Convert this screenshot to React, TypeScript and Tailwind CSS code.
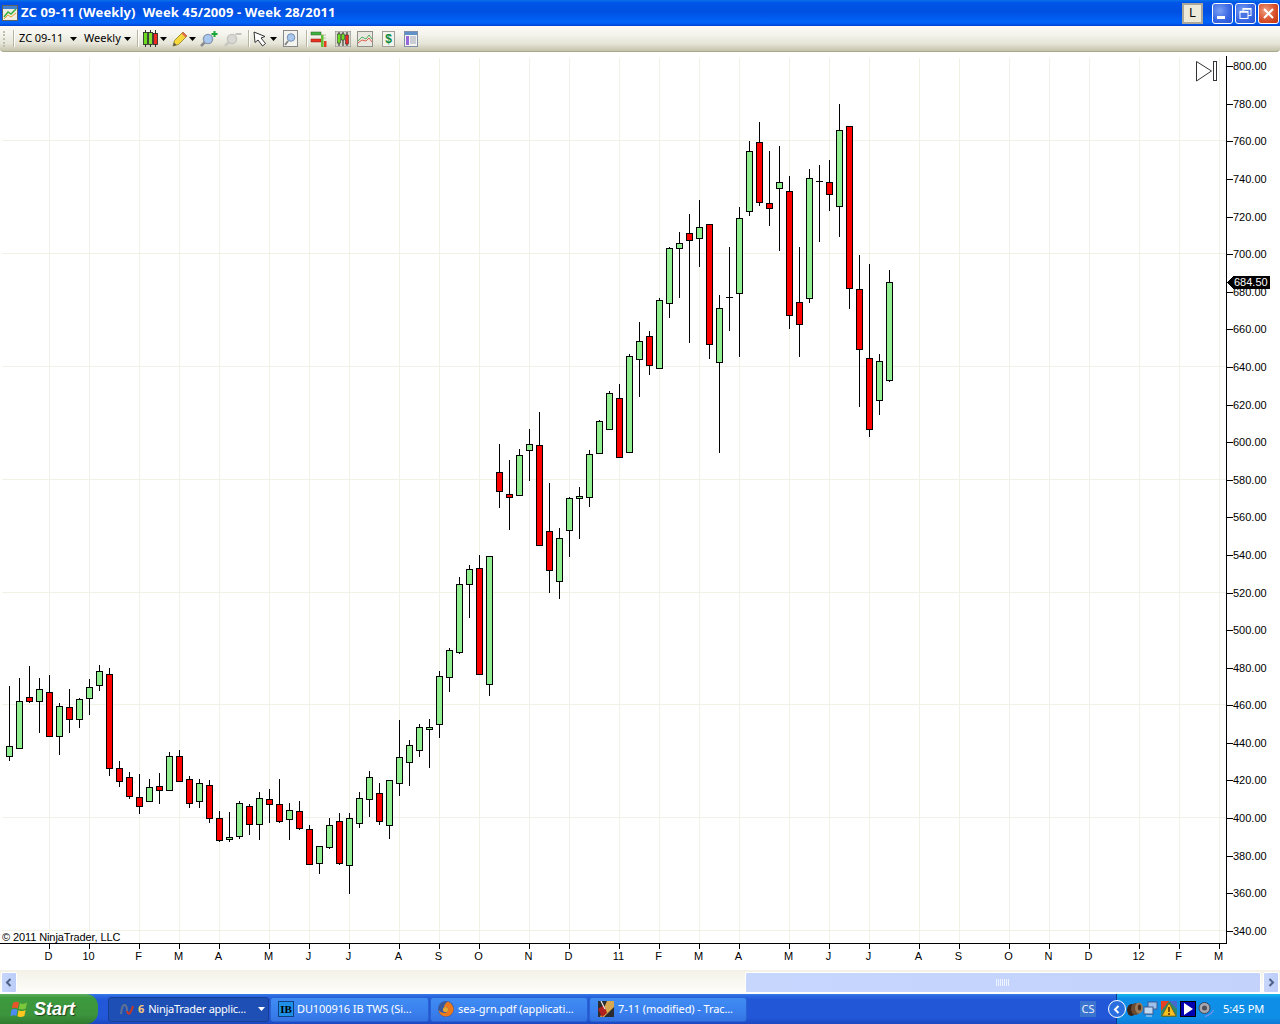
import React from "react";

type C = [number, number, number, number, "g" | "r" | "d"];
// wickTop, wickBottom, bodyTop, bodyBottom; x = 9 + 10 * index
const candles: C[] = [
  [686,761,746,756,"g"],[678,749,701,748,"g"],[666,703,697,701,"r"],[678,733,689,701,"g"],[675,737,692,736,"r"],
  [703,755,706,736,"g"],[689,733,707,719,"r"],[698,728,699,719,"g"],[679,715,687,698,"g"],[665,691,671,685,"g"],
  [668,776,674,768,"r"],[761,787,768,781,"r"],[772,799,777,796,"r"],[774,814,797,806,"r"],[779,802,787,801,"g"],
  [773,804,786,790,"r"],[752,790,756,790,"g"],[750,782,756,781,"r"],[776,808,779,803,"r"],[779,808,783,801,"g"],
  [780,823,785,818,"r"],[811,842,818,840,"r"],[812,842,837,839,"g"],[801,839,803,836,"g"],[804,835,806,824,"r"],
  [792,840,798,824,"g"],[789,823,799,804,"r"],[779,823,804,821,"r"],[803,840,810,819,"g"],[801,830,811,828,"r"],
  [825,865,829,864,"r"],[846,874,846,863,"g"],[818,849,825,847,"g"],[813,865,821,863,"r"],[813,894,818,865,"g"],
  [792,828,798,823,"g"],[771,817,777,799,"g"],[783,825,793,821,"r"],[780,839,780,825,"g"],[720,796,757,783,"g"],
  [740,786,745,762,"g"],[724,757,727,750,"g"],[719,768,727,729,"g"],[671,738,676,724,"g"],[648,692,650,677,"g"],
  [577,654,584,652,"g"],[565,618,569,584,"g"],[555,674,568,674,"r"],[556,696,556,684,"g"],[444,508,472,491,"r"],
  [460,530,494,497,"r"],[449,496,455,495,"g"],[429,481,444,450,"g"],[412,545,445,545,"r"],[483,593,531,570,"r"],
  [528,599,538,581,"g"],[497,557,498,530,"g"],[487,539,496,498,"g"],[450,507,454,497,"g"],[420,454,421,453,"g"],
  [391,430,393,429,"g"],[384,458,398,457,"r"],[354,453,356,452,"g"],[322,397,341,359,"g"],[331,375,336,365,"r"],
  [298,368,300,368,"g"],[247,318,248,303,"g"],[232,298,243,248,"g"],[214,343,233,240,"r"],[200,267,227,238,"g"],
  [224,359,224,344,"r"],[295,453,308,362,"g"],[247,331,297,297,"d"],[207,357,218,293,"g"],[141,216,151,211,"g"],
  [122,206,142,202,"r"],[151,226,203,208,"r"],[146,251,182,188,"g"],[176,329,191,315,"r"],[247,357,302,324,"r"],
  [169,303,178,298,"g"],[165,242,181,181,"d"],[160,211,182,194,"r"],[104,237,130,206,"g"],[126,309,126,288,"r"],
  [255,407,289,349,"r"],[264,437,358,429,"r"],[354,415,361,400,"g"],[270,382,282,380,"g"],
];

const vGrid = [49,89,139,179,219,269,309,349,399,439,479,529,569,619,659,699,739,789,829,869,919,959,1009,1049,1089,1139,1179,1219];
const xLabels = ["D","10","F","M","A","M","J","J","A","S","O","N","D","11","F","M","A","M","J","J","A","S","O","N","D","12","F","M"];
const hGrid = [140,253,366,479,592,704,817,930];
const prices = Array.from({ length: 24 }, (_, i) => 800 - i * 20);
const priceY = [66,104,141,179,217,254,292,329,367,405,442,480,517,555,593,630,668,705,743,780,818,856,893,931];
const T = 52; // chart top in page coordinates

function Chart() {
  return (
    <svg width="1280" height="918" viewBox={`0 ${T} 1280 918`} className="block" shapeRendering="crispEdges">
      {vGrid.map((x) => <rect key={x} x={x} y={58} width="1" height="885" fill="#f1f1e6" />)}
      {hGrid.map((y) => <rect key={y} x={2} y={y} width="1224" height="1" fill="#f1f1e6" />)}
      {candles.map(([wt, wb, bt, bb, k], i) => {
        const x = 9 + i * 10;
        return (
          <g key={i}>
            <rect x={x} y={wt} width="1" height={wb - wt} fill="#000" />
            {k === "d" ? (
              <rect x={x - 3} y={bt} width="7" height="1" fill="#000" />
            ) : (
              <rect x={x - 2.5} y={bt + 0.5} width="6" height={bb - bt} fill={k === "g" ? "#90ee90" : "#ff0000"} stroke="#000" strokeWidth="1" />
            )}
          </g>
        );
      })}
      <rect x={0} y={943} width="1227" height="1" fill="#000" />
      <rect x={1226} y={56} width="1" height="888" fill="#000" />
      {vGrid.map((x) => <rect key={x} x={x} y={943} width="1" height="6" fill="#000" />)}
      {priceY.map((y) => <rect key={y} x={1227} y={y} width="6" height="1" fill="#000" />)}
      <g style={{ fontFamily: '"Liberation Sans", Arial, sans-serif', fontSize: 11 }} fill="#000" shapeRendering="auto">
        {prices.map((p, i) => (
          <text key={p} x={1233} y={priceY[i] + 4}>{p.toFixed(2)}</text>
        ))}
        {vGrid.map((x, i) => (
          <text key={x} x={x - 0.5} y={960} textAnchor="middle">{xLabels[i]}</text>
        ))}
        <text x={2} y={941} letterSpacing="-0.1">© 2011 NinjaTrader, LLC</text>
      </g>
      <path d="M1227 282.5 L1233 276 H1270 V289 H1233 Z" fill="#000" />
      <text x={1234} y={286} fill="#fff" style={{ fontFamily: '"Liberation Sans", Arial, sans-serif', fontSize: 11 }} shapeRendering="auto">684.50</text>
      <g fill="none" stroke="#333" strokeWidth="1" shapeRendering="auto">
        <path d="M1196.5 61.5 L1211.5 71 L1196.5 81 Z" />
        <rect x="1213.5" y="61.5" width="3" height="19" />
      </g>
    </svg>
  );
}

function Caret({ color = "#000" }: { color?: string }) {
  return <svg width="7" height="4" viewBox="0 0 7 4" className="block"><path d="M0 0H7L3.5 4Z" fill={color} /></svg>;
}

function Sep() {
  return <div className="w-[1px] h-[17px] bg-[#b8b5a0] border-r border-white box-content" />;
}

function CandleIcon() {
  return (
    <svg width="15" height="17" viewBox="0 0 15 17" className="block">
      <path d="M2.5 0v17M7.5 0v17M12.5 0v17" stroke="#333" />
      <rect x="0.5" y="2.5" width="4" height="12" fill="#6cdc20" stroke="#222" strokeWidth="0.8" />
      <rect x="5.5" y="2.5" width="4" height="12" fill="#7ee030" stroke="#222" strokeWidth="0.8" />
      <rect x="10.5" y="3.5" width="4" height="11" fill="#ee2a20" stroke="#222" strokeWidth="0.8" />
    </svg>
  );
}

function Pencil() {
  return (
    <svg width="16" height="16" viewBox="0 0 16 16" className="block">
      <path d="M1 15 L2.5 9.5 L11 1 L15 5 L6.5 13.5 Z" fill="#f6d83a" stroke="#8a7a20" strokeWidth="0.8" />
      <path d="M11 1 L15 5 L13.5 6.5 L9.5 2.5 Z" fill="#e06a50" />
      <path d="M1 15 L2 11.5 L4.5 14 Z" fill="#555" />
    </svg>
  );
}

function Magnifier({ plus, gray }: { plus?: boolean; gray?: boolean }) {
  return (
    <svg width="18" height="16" viewBox="0 0 18 16" className="block">
      <path d="M1 15 L5 11" stroke={gray ? "#c8c8c0" : "#8a8a90"} strokeWidth="2.5" />
      <circle cx="8" cy="8" r="4.6" fill={gray ? "#d8d8d4" : "#a8c8f0"} stroke={gray ? "#c4c4be" : "#8898b0"} strokeWidth="1.4" />
      {plus ? (
        <path d="M14.5 0v6M11.5 3h6" stroke="#18a838" strokeWidth="2" />
      ) : (
        <path d="M11.5 3h6" stroke="#c4c4be" strokeWidth="2" />
      )}
    </svg>
  );
}

function Arrow() {
  return (
    <svg width="15" height="16" viewBox="0 0 15 16" className="block">
      <path d="M1 1 L2 11.5 L5 9 L9.5 15 L12.5 12.5 L8 7 L12 5.5 Z" fill="#fff" stroke="#333" />
    </svg>
  );
}

function BoxMagnifier() {
  return (
    <svg width="15" height="17" viewBox="0 0 15 17" className="block">
      <rect x="0.5" y="0.5" width="14" height="16" fill="#f4f4f0" stroke="#888" />
      <circle cx="8" cy="7.5" r="3.8" fill="#a8c8f0" stroke="#7890b0" />
      <path d="M2 15 L5 11" stroke="#888" strokeWidth="2" />
    </svg>
  );
}

function BarsIcon() {
  return (
    <svg width="17" height="18" viewBox="0 0 17 18" className="block">
      <path d="M1 3h9M1 10h9M11 5h5M11 8h5M11 13h5M11 16h5" stroke="#b8b8a8" />
      <rect x="1" y="2" width="10" height="3" fill="#40b040" stroke="#206020" strokeWidth="0.5" />
      <rect x="1" y="9" width="10" height="3" fill="#e83020" stroke="#802010" strokeWidth="0.5" />
      <rect x="11" y="5" width="2.5" height="12" fill="#60c030" />
      <rect x="14" y="11" width="2.5" height="6" fill="#e04020" />
    </svg>
  );
}

function FrameCandles() {
  return (
    <svg width="16" height="16" viewBox="0 0 16 16" className="block">
      <rect x="0" y="0" width="16" height="16" fill="#d8d8cc" stroke="#888" />
      <path d="M4 1v14M8 1v14M12 1v14" stroke="#222" />
      <rect x="2.5" y="3" width="3" height="9" fill="#6cdc20" stroke="#222" strokeWidth="0.5" />
      <rect x="6.5" y="3" width="3" height="6" fill="#6cdc20" stroke="#222" strokeWidth="0.5" />
      <rect x="10.5" y="4" width="3" height="9" fill="#ee2a20" stroke="#222" strokeWidth="0.5" />
    </svg>
  );
}

function LinesIcon() {
  return (
    <svg width="16" height="16" viewBox="0 0 16 16" className="block">
      <rect x="0.5" y="0.5" width="15" height="15" fill="#e8e8e0" stroke="#909088" />
      <path d="M1 10 L5 6 L9 8 L12 4 L15 8" fill="none" stroke="#50b060" />
      <path d="M1 12 L5 9 L9 10 L12 7 L15 11" fill="none" stroke="#e06050" />
    </svg>
  );
}

function DollarDoc() {
  return (
    <div className="w-[13px] h-[16px] bg-[#f4f4ee] border border-[#a0a098] flex items-center justify-center text-[12px] leading-none font-bold text-[#0a8a3a] font-['Liberation_Sans',sans-serif]">$</div>
  );
}

function WindowIcon() {
  return (
    <svg width="14" height="16" viewBox="0 0 14 16" className="block">
      <rect x="0.5" y="0.5" width="13" height="15" fill="#f4f4f0" stroke="#8090a8" />
      <rect x="1" y="1" width="12" height="3" fill="#6090c8" />
      <rect x="2" y="5" width="3" height="9" fill="#9868d8" />
      <path d="M6 6h6M6 8h6M6 10h6M6 12h6" stroke="#a0a8b8" />
    </svg>
  );
}

function TitleAppIcon() {
  return (
    <svg width="16" height="16" viewBox="0 0 16 16" className="block">
      <rect x="0.5" y="0.5" width="15" height="15" fill="#f0ece0" stroke="#606060" />
      <path d="M1 1h14v3H1z" fill="#4080d0" />
      <path d="M2 12 L6 7 L9 9 L14 4" fill="none" stroke="#30b040" strokeWidth="1.5" />
      <path d="M2 14 L6 10 L9 12 L14 8" fill="none" stroke="#e8a030" />
    </svg>
  );
}

function WinBtn({ kind }: { kind: "min" | "max" | "close" }) {
  const cls =
    kind === "close"
      ? "bg-[radial-gradient(circle_at_35%_35%,#f0a080,#d8522c_55%,#c03010)]"
      : "bg-[radial-gradient(circle_at_35%_35%,#7aa0f4,#3c6ae4_55%,#2450d0)]";
  return (
    <div className={`w-[21px] h-[21px] rounded-[3px] border border-white flex items-center justify-center ${cls}`}>
      {kind === "min" && <div className="w-[8px] h-[3px] bg-white mt-[9px] mr-[3px]" />}
      {kind === "max" && (
        <svg width="13" height="13" viewBox="0 0 13 13" className="block">
          <rect x="4" y="1.5" width="8" height="7" fill="none" stroke="#fff" strokeWidth="1" />
          <rect x="1" y="4.5" width="8" height="7" fill="#4a74e4" stroke="#fff" strokeWidth="1" />
          <path d="M1 5h8M4 2h8" stroke="#fff" strokeWidth="1.6" />
        </svg>
      )}
      {kind === "close" && (
        <svg width="13" height="13" viewBox="0 0 13 13" className="block">
          <path d="M2 2L11 11M11 2L2 11" stroke="#fff" strokeWidth="2" />
        </svg>
      )}
    </div>
  );
}

function TitleBar() {
  return (
    <div className="h-[26px] flex items-center pl-[2px] pr-[1px] bg-[linear-gradient(180deg,#0a72e8_0,#0055e8_10%,#0050e2_45%,#0064f8_85%,#0058ee_92%,#0040d0_100%)]">
      <div className="w-[16px] mr-[3px]"><TitleAppIcon /></div>
      <div className="flex-1 text-white text-[13px] font-bold whitespace-pre font-['Noto_Sans',sans-serif] tracking-[0.13px]">
        {"ZC 09-11 (Weekly)  Week 45/2009 - Week 28/2011"}
      </div>
      <div className="w-[21px] h-[21px] mr-[9px] bg-[#ece9d8] border-2 border-[#aca899] flex items-center justify-center text-[12px] text-black font-['Liberation_Sans',sans-serif]">L</div>
      <div className="flex gap-[2px]">
        <WinBtn kind="min" />
        <WinBtn kind="max" />
        <WinBtn kind="close" />
      </div>
    </div>
  );
}

function Toolbar() {
  return (
    <div className="h-[26px] flex items-center rounded-b-[4px] border-b border-[#a8a888] bg-[linear-gradient(180deg,#fbfaf6_0,#f4f3ec_35%,#e6e5d8_70%,#c4c3ac_100%)] font-['Liberation_Sans',sans-serif] text-[11px] text-black">
      <div className="ml-[3px] w-[3px] h-[16px] border-l-2 border-dotted border-[#c0c0b0]" />
      <div className="ml-[7px]"><Sep /></div>
      <span className="ml-[4px] w-[51px] tracking-[-0.05px] font-['Noto_Sans',sans-serif]">ZC 09-11</span>
      <span><Caret /></span>
      <span className="ml-[7px] w-[40px] font-['Noto_Sans',sans-serif]">Weekly</span>
      <span><Caret /></span>
      <div className="ml-[6px]"><Sep /></div>
      <div className="ml-[4px]"><CandleIcon /></div>
      <span className="ml-[2px]"><Caret /></span>
      <div className="ml-[5px]"><Pencil /></div>
      <span className="ml-[1px]"><Caret /></span>
      <div className="ml-[4px]"><Magnifier plus /></div>
      <div className="ml-[6px]"><Magnifier gray /></div>
      <div className="ml-[6px]"><Sep /></div>
      <div className="ml-[3px]"><Arrow /></div>
      <span className="ml-[2px]"><Caret /></span>
      <div className="ml-[6px]"><BoxMagnifier /></div>
      <div className="ml-[8px]"><Sep /></div>
      <div className="ml-[2px]"><BarsIcon /></div>
      <div className="ml-[8px]"><FrameCandles /></div>
      <div className="ml-[6px]"><LinesIcon /></div>
      <div className="ml-[9px]"><DollarDoc /></div>
      <div className="ml-[9px]"><WindowIcon /></div>
    </div>
  );
}

function ScrollBtn({ dir }: { dir: "l" | "r" }) {
  return (
    <div className="w-[16px] h-[21px] rounded-[2px] border border-white bg-[linear-gradient(90deg,#c8d6fc,#bccdf8)] flex items-center justify-center">
      <svg width="7" height="9" viewBox="0 0 7 9" className="block">
        <path d={dir === "l" ? "M5.5 1L2 4.5L5.5 8" : "M1.5 1L5 4.5L1.5 8"} fill="none" stroke="#4d6185" strokeWidth="2" />
      </svg>
    </div>
  );
}

function ScrollBar() {
  return (
    <div className="h-[24px] flex items-center pl-[1px] pr-[1px] bg-[linear-gradient(180deg,#f3f1e7,#fefefb)]">
      <ScrollBtn dir="l" />
      <div className="ml-[728px] w-[518px] h-[21px] rounded-[2px] border border-white bg-[linear-gradient(90deg,#c6d6fd,#c2d2fb)] flex items-center justify-center gap-[1px]">
        {[0, 1, 2, 3, 4, 5, 6].map((i) => <div key={i} className="w-[1px] h-[7px] bg-[#eef4ff]" />)}
      </div>
      <div className="ml-[2px]"><ScrollBtn dir="r" /></div>
    </div>
  );
}

function WinFlag() {
  return (
    <svg width="20" height="19" viewBox="0 0 20 19" className="block">
      <path d="M3 3 Q6 1 9 2.5 L7.8 8.5 Q5 7 1.8 8.6 Z" fill="#e8542a" />
      <path d="M10 3 Q13 5 17 2.5 L15.8 8.6 Q12 10.4 8.8 8.8 Z" fill="#7cc83c" />
      <path d="M1.5 9.8 Q4.5 8.2 7.5 10 L6.3 15.8 Q3.5 14.5 0.4 16 Z" fill="#4c8cf0" />
      <path d="M8.6 10.2 Q12 12 15.6 10 L14.4 16 Q10.5 17.8 7.4 16.2 Z" fill="#fcc820" />
    </svg>
  );
}

function TaskBtn({ w, active, children }: { w: string; active?: boolean; children: React.ReactNode }) {
  return (
    <div className={`${w} h-[25px] rounded-[3px] flex items-center text-white text-[11px] tracking-[-0.1px] whitespace-nowrap overflow-hidden font-['Noto_Sans',sans-serif] ${active ? "bg-[#1e4fb4] border border-[#183d94]" : "bg-[linear-gradient(180deg,#3f8cf3,#3a80ee_60%,#3473e2)] border border-[#2a62d2]"}`}>
      {children}
    </div>
  );
}

function Taskbar() {
  return (
    <div className="h-[30px] flex items-center bg-[linear-gradient(180deg,#3a7ae8_0,#2a66e0_8%,#2257d8_20%,#2257d8_80%,#1c48c0_100%)] font-['Noto_Sans',sans-serif]">
      <div className="w-[98px] h-[30px] flex items-center pl-[10px] gap-[4px] rounded-r-[12px] bg-[linear-gradient(180deg,#62b062_0,#3d9a3d_12%,#3c943c_70%,#2f7a2f_100%)]">
        <WinFlag />
        <span className="text-white text-[18px] italic font-bold font-['Liberation_Sans',sans-serif] [text-shadow:1px_1px_1px_#204020]">Start</span>
      </div>
      <div className="ml-[10px] flex items-center gap-[1px]">
        <TaskBtn w="w-[161px]" active>
          <svg width="16" height="16" viewBox="0 0 16 16" className="block ml-[10px] shrink-0">
            <path d="M8 10 Q9 14 11 12 Q13 9 14 5" fill="none" stroke="#c83828" strokeWidth="2" />
            <path d="M2 13 Q3 3 6 4 Q8 5 8 10" fill="none" stroke="#607090" strokeWidth="2" />
          </svg>
          <span className="ml-[3px] font-bold text-[#f8c878]">6</span>
          <span className="ml-[4px] flex-1 tracking-[-0.25px]">NinjaTrader applic...</span>
          <span className="mr-[3px]"><Caret color="#fff" /></span>
        </TaskBtn>
        <TaskBtn w="w-[159px]">
          <div className="ml-[7px] mr-[3px] w-[16px] h-[16px] shrink-0 bg-[#1e90e8] border border-[#104080] text-black text-[11px] leading-[14px] font-bold text-center font-['Liberation_Serif',serif]">IB</div>
          <span>DU100916 IB TWS (Si...</span>
        </TaskBtn>
        <TaskBtn w="w-[158px]">
          <svg width="16" height="16" viewBox="0 0 16 16" className="block ml-[7px] mr-[4px] shrink-0">
            <circle cx="8" cy="8" r="8" fill="#3a5a9c" />
            <path d="M10 0.5 Q16 4 15.5 9 Q14 15 8 15.5 Q2 15.5 0.5 9 Q3 12.5 7 12 Q11 10.5 10 7 Q8 5.5 6 6.5 Q6 3 10 0.5Z" fill="#ec7a1c" />
            <circle cx="7.5" cy="8.5" r="2.6" fill="#e8a830" />
          </svg>
          <span>sea-grn.pdf (applicati...</span>
        </TaskBtn>
        <TaskBtn w="w-[158px]">
          <svg width="16" height="16" viewBox="0 0 16 16" className="block ml-[8px] mr-[4px] shrink-0">
            <rect width="16" height="16" fill="#2c2c30" />
            <path d="M9 0h7v6L6 16H2z" fill="#d8a850" />
            <path d="M0 8 L6 4 L9 12 L4 16Z" fill="#b02020" />
            <path d="M3 0 L7 8" stroke="#e8e8e8" strokeWidth="1.2" />
          </svg>
          <span>7-11 (modified) - Trac...</span>
        </TaskBtn>
      </div>
      <div className="flex-1 flex justify-end">
        <div className="mr-[20px] w-[16px] h-[16px] bg-[#3b74cf] text-[#e8f0ff] text-[11px] leading-[16px] text-center">CS</div>
      </div>
      <div className="relative w-[164px] h-[30px] flex items-center border-l border-[#10398c] bg-[linear-gradient(180deg,#18b8f0_0,#0e8fe8_15%,#0f8ee6_80%,#0c78d4_100%)]">
        <div className="absolute left-[-9px] top-[6px] w-[18px] h-[18px] rounded-full border border-white bg-[#2a6fe0] flex items-center justify-center">
          <svg width="8" height="9" viewBox="0 0 8 9" className="block"><path d="M5.5 1L2 4.5L5.5 8" fill="none" stroke="#fff" strokeWidth="2" /></svg>
        </div>
        <svg width="16" height="16" viewBox="0 0 16 16" className="block ml-[10px] shrink-0">
          <ellipse cx="4.5" cy="9" rx="4.5" ry="6" fill="#3a2418" />
          <ellipse cx="8.5" cy="8" rx="4.5" ry="6" fill="#6a4a30" />
          <ellipse cx="12" cy="7" rx="4" ry="5.5" fill="#9a7a58" />
          <ellipse cx="12.5" cy="6.5" rx="1.6" ry="3" fill="#4a3020" />
        </svg>
        <svg width="17" height="16" viewBox="0 0 17 16" className="block shrink-0">
          <rect x="5" y="1" width="9" height="7" fill="#a0c0e8" stroke="#405a90" />
          <rect x="1" y="6" width="9" height="7" fill="#c0d8f0" stroke="#405a90" />
          <path d="M3 15h6" stroke="#d8d8e8" />
        </svg>
        <svg width="17" height="16" viewBox="0 0 17 16" className="block ml-[1px] shrink-0">
          <rect width="16" height="16" y="0" fill="#2c8a6a" />
          <path d="M0 0h8L0 10z" fill="#e84020" />
          <path d="M8 0h8v8z" fill="#4868d0" />
          <path d="M8 2L15 15H1Z" fill="#f8c020" stroke="#704010" strokeWidth="0.6" />
          <path d="M8 6v5M8 12v2" stroke="#402000" strokeWidth="1.4" />
        </svg>
        <div className="ml-[2px] w-[16px] h-[16px] bg-[#0000b0] border border-black flex items-center justify-center shrink-0">
          <svg width="10" height="12" viewBox="0 0 10 12" className="block"><path d="M1 0L10 6L1 12Z" fill="#fff" /></svg>
        </div>
        <svg width="17" height="17" viewBox="0 0 17 17" className="block ml-[2px] shrink-0">
          <circle cx="6.5" cy="7" r="5.5" fill="#a8a8b0" stroke="#303040" strokeWidth="0.8" />
          <circle cx="6.5" cy="7" r="2.5" fill="#505058" />
          <path d="M7 15.5 Q13 14 15.5 9" fill="none" stroke="#8090e8" strokeWidth="1.2" />
        </svg>
        <span className="ml-[8px] text-white text-[11px] whitespace-nowrap">5:45 PM</span>
      </div>
    </div>
  );
}

export default function App() {
  return (
    <div className="w-[1280px] h-[1024px] flex flex-col overflow-hidden bg-white">
      <TitleBar />
      <Toolbar />
      <Chart />
      <ScrollBar />
      <Taskbar />
    </div>
  );
}
